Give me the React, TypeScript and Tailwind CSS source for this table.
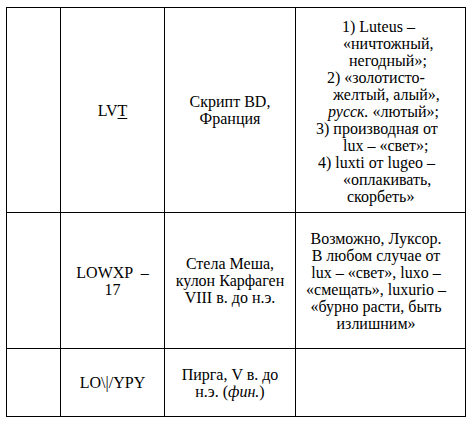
import React from "react";

function Cell({ children, className = "" }: { children?: React.ReactNode; className?: string }) {
  return (
    <div className={"border-r border-b border-black flex flex-col items-center justify-center text-center " + className}>
      {children}
    </div>
  );
}

const row1Lines: { t: React.ReactNode; ml: number }[] = [
  { t: "1) Luteus –", ml: 46 },
  { t: "«ничтожный,", ml: 47 },
  { t: "негодный»;", ml: 53 },
  { t: "2) «золотисто-", ml: 31 },
  { t: "желтый, алый»,", ml: 37 },
  { t: <><i>русск.</i> «лютый»;</>, ml: 32 },
  { t: "3) производная от", ml: 20 },
  { t: "lux – «свет»;", ml: 47 },
  { t: "4) luxti от lugeo –", ml: 22 },
  { t: "«оплакивать,", ml: 47 },
  { t: "скорбеть»", ml: 51 },
];

export default function App() {
  return (
    <div className="w-[467px] h-[421px] bg-white text-black pt-[7px] pl-[6px] font-['Liberation_Serif','Times_New_Roman',serif]">
      <div className="grid grid-cols-[54px_104px_131px_170px] grid-rows-[205px_136px_68px] border-l border-t border-black w-max text-[16px] leading-[17px]">
        {/* Row 1 */}
        <Cell />
        <Cell>
          <div>
            LV<span className="underline underline-offset-2">T</span>
          </div>
        </Cell>
        <Cell>
          <div>Скрипт BD,</div>
          <div>Франция</div>
        </Cell>
        <div className="border-r border-b border-black flex flex-col justify-center pt-[3px]">
          {row1Lines.map((l, i) => (
            <div key={i} style={{ marginLeft: l.ml }} className="whitespace-nowrap">
              {l.t}
            </div>
          ))}
        </div>

        {/* Row 2 */}
        <Cell />
        <Cell>
          <div className="whitespace-pre">LOWXP  –</div>
          <div>17</div>
        </Cell>
        <Cell>
          <div className="whitespace-nowrap">Стела Меша,</div>
          <div className="whitespace-nowrap">кулон Карфаген</div>
          <div className="whitespace-nowrap">VIII в. до н.э.</div>
        </Cell>
        <Cell className="pr-[9px]">
          <div className="whitespace-nowrap">Возможно, Луксор.</div>
          <div className="whitespace-nowrap">В любом случае от</div>
          <div className="whitespace-nowrap">lux – «свет», luxo –</div>
          <div className="whitespace-nowrap">«смещать», luxurio –</div>
          <div className="whitespace-nowrap">«бурно расти, быть</div>
          <div className="whitespace-nowrap">излишним»</div>
        </Cell>

        {/* Row 3 */}
        <Cell />
        <Cell>
          <div>LO\|/YPY</div>
        </Cell>
        <Cell>
          <div className="whitespace-nowrap">Пирга, V в. до</div>
          <div>
            н.э. (<i>фин.</i>)
          </div>
        </Cell>
        <Cell />
      </div>
    </div>
  );
}
